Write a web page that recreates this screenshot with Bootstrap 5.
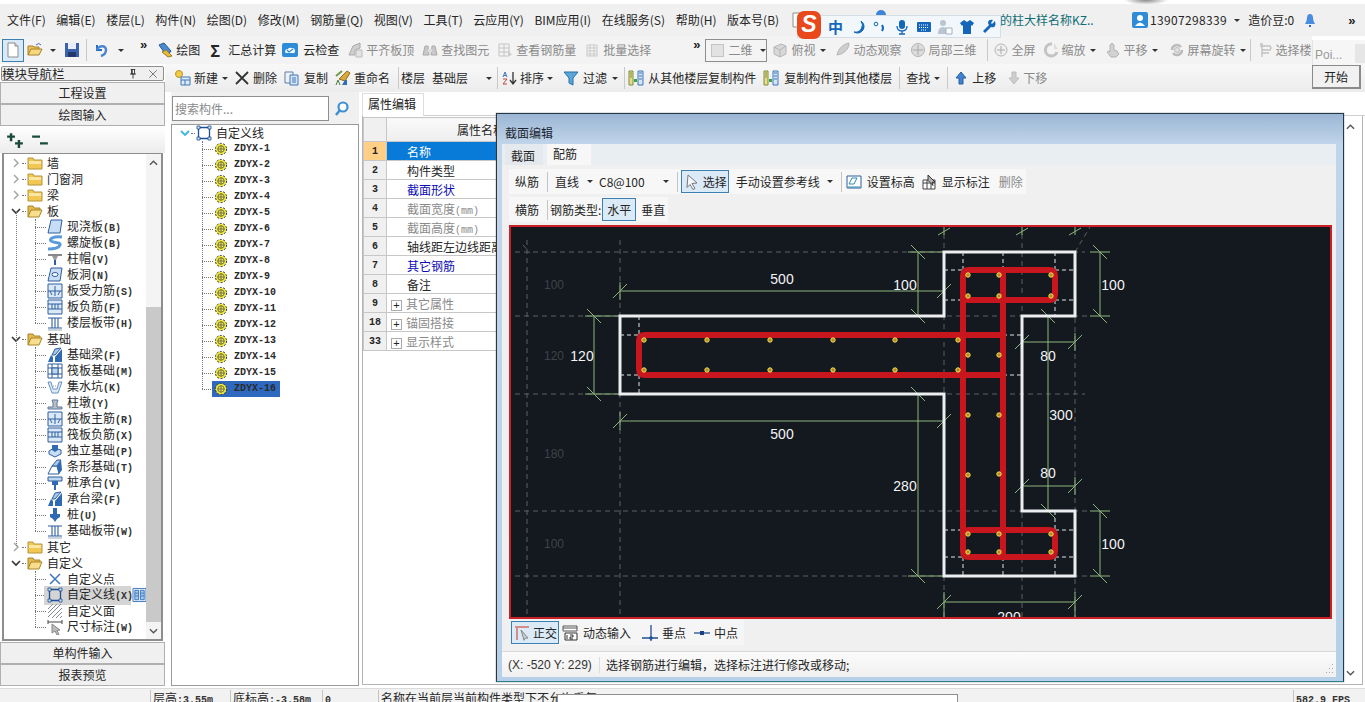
<!DOCTYPE html>
<html lang="zh-CN">
<head>
<meta charset="utf-8">
<title>截面编辑</title>
<link href="https://cdn.jsdelivr.net/npm/bootstrap@5.3.0/dist/css/bootstrap.min.css" rel="stylesheet">
<style>
html,body{height:702px;overflow:hidden;background:#fff}
body{font:12px/16px "Noto Sans CJK SC","Liberation Sans",sans-serif;color:#262626}
.app{position:relative;width:1365px;height:702px;overflow:hidden}
svg.ic{width:16px;height:16px;flex:none;display:block}
svg.ic12{width:12px;height:12px;flex:none;display:block}
.topgap{height:4px;background:radial-gradient(ellipse 22px 5px at 1146px 0,#8a8a8a,#fff)}
.menubar{height:32px;background:#f0f0f0;padding-left:7px;white-space:nowrap}
.menuitems{gap:10.6px}
.rcluster{width:365px;margin-left:auto;flex:none}
.teal{color:#0f6e75;width:93px;flex:none}
.phone{letter-spacing:.35px}
.peek{position:absolute;left:876px;top:10px;width:10px;height:5px;background:#3b86d6;border-radius:5px 5px 0 0}
.toolrow{height:28px;width:1312px;overflow:hidden;background:#f3f3f3;white-space:nowrap}
.rowthree{height:28px;background:linear-gradient(#f8f8f8,#ececec);padding-left:4px;white-space:nowrap}
.it{display:inline-flex;align-items:center;gap:3px;margin-left:8px;flex:none}
.off{color:#8a8a8a}
.tri{display:inline-block;width:0;height:0;border:3px solid transparent;border-top:3px solid #333;border-bottom:0;margin-left:4px;flex:none}
.rowthree .it>.tri,.toolrow .off>.tri{margin-left:1px}
.sepv{width:1px;height:22px;background:#c9c9c9;margin-left:6px;flex:none}
.more{font:bold 13px/14px "Liberation Sans",sans-serif;color:#222;margin-left:16px;flex:none;align-self:flex-start;margin-top:2px}
.pressed{background:#d8e9f8;border:1px solid #3c7fb1;height:23px;padding:0 2px}
.ml0{margin-left:0}.ml1{margin-left:1px}.ml2{margin-left:2px}.ml3{margin-left:3px}.ml4{margin-left:4px}.ml5{margin-left:5px}.ml6{margin-left:6px}.ml7{margin-left:7px}.ml8{margin-left:8px}.ml9{margin-left:9px}.ml10{margin-left:10px}.ml11{margin-left:11px}.ml12{margin-left:12px}.ml13{margin-left:13px}.ml15{margin-left:15px}.ml16{margin-left:16px}.ml18{margin-left:18px}.ml30{margin-left:30px}.ml39{margin-left:39px}.ml42{margin-left:42px}
.g1{gap:1px}.g2{gap:2px}.g3{gap:3px}.g4{gap:4px}.g5{gap:5px}
.combo2d{width:62px;height:23px;border:1px solid #8e8e8e;background:#f4f4f4;margin-left:5px;gap:4px;padding-left:5px;color:#8a8a8a;flex:none}
.combo2d b{width:15px;height:13px;background:#e2e2e2;border:1px solid #c4c4c4;display:block}
.mainarea{height:624px}
.leftpane{width:165px;padding-top:2px;flex:none}
.panehead{height:15px;margin:0 1px 1px;border:1px solid #8f8f8f;background:#efefef;line-height:12px;font-size:12.5px;border-radius:2px}
.navbtn.btn{display:block;width:100%;height:22px;padding:0;border-radius:0;border:1px solid #b0b0b0;background:#f0f0f0;font-size:12px;line-height:20px;color:#262626;margin:0}
.pm{height:27px;background:linear-gradient(#fff,#ececec);padding-left:6px;gap:7px}
.pm svg.ic{width:18px;height:18px}
.leftbox{height:488px;border:1px solid #8e8e8e;border-width:1px 2px 2px;margin:0 0 1px 2px;width:161px;background:#fff;position:relative;overflow:hidden;padding-top:1px}
.rowt{height:16px;display:flex;align-items:center;white-space:nowrap}
.chev{width:12px;margin-left:6px;flex:none;display:block;height:10px}
.dashh{width:4px;border-bottom:1px dotted #777;flex:none;margin-right:1px}
.kids{margin-left:31px;position:relative}
.kids::before{content:"";position:absolute;left:0;top:0;bottom:8px;border-left:1px dotted #777}
.kids.long::after{content:"";position:absolute;left:-19px;top:-7px;bottom:-7px;border-left:1px dotted #777}
.kids .dashh{width:11px;margin-right:1px}
.kids .lbl{margin-left:4px}
.lat{font:10px/16px "Liberation Mono",monospace;font-weight:700;color:#333}
.fold{width:16px;height:14px;margin-right:4px;flex:none}
.curitem{background:#d4d4d4;width:87px;margin-left:-3px;padding-left:3px;flex:none}
.sidegrid{width:15px;height:16px;flex:none;margin-left:1px}
.scrolly{position:absolute;right:0;top:0;bottom:0;width:15px;background:#f4f4f4}
.thumb{position:absolute;left:0;right:0;top:153px;height:315px;background:#c9c9c9}
.arrowup,.arrowdn{position:absolute;left:3px;width:9px;height:6px}
.arrowup{top:6px}.arrowdn{bottom:5px}
.midpane{width:188px;margin-left:6px;flex:none}
.searchrow{height:32px;background:#f0f0f0;padding-top:4px}
.searchrow .form-control{width:157px;height:25px;border:1px solid #8e8e8e;border-radius:0;font-size:12px;padding:0 2px;margin-left:1px;box-shadow:none}
.searchrow .form-control::placeholder{color:#8a8a8a}
.searchrow svg.ic{margin:5px 0 0 5px}
.comptree{height:562px;border:1px solid #9a9a9a;background:#fff}
.comptree .top{padding-left:7px}
.comptree .chev{margin-left:0;width:12px}
.ck{margin-left:30px;position:relative}
.ck::before{content:"";position:absolute;left:0;top:0;bottom:8px;border-left:1px dotted #777}
.ck .rowt svg{width:14px;height:14px;flex:none}
.ck .dashh{width:11px;margin-right:1px}
.zd{font:10px/16px "Liberation Mono",monospace;font-weight:700;color:#2b2b2b;margin-left:6px}
.selwrap{margin-left:-2px;padding:0 4px 0 2px;background:#2e68bf;display:flex;align-items:center;height:16px;flex:none}
.rightpane{margin-left:3px;flex-grow:1;min-width:0}
.tabsrow .nav-link{height:23px;padding:2px 5px;font-size:12px;color:#222;border:1px solid #ddd;border-bottom:0;border-radius:0;background:#fff;width:62px}
.tabsrow{height:24px;padding-top:1px;border-bottom:1px solid #cfcfcf}
.propbox{height:569px;border:1px solid #b4b4b4;border-top:0;margin-right:2px;padding:1px 0 0 0;position:relative}
.proptable.table{width:213px;table-layout:fixed;margin:0;font-size:12px;--bs-table-border-color:#c7c7c7;--bs-table-color:#262626}
.proptable th,.proptable td{padding:0;height:19px;line-height:17px;white-space:nowrap;overflow:hidden;font-weight:400;vertical-align:middle}
.proptable thead th{height:24px;background:linear-gradient(#fafafa,#eee);text-align:center}
.proptable .num{background:#f0f0f0;text-align:center;font:10px/17px "Liberation Mono",monospace;font-weight:700;width:23px}
.proptable .nm{padding-left:20px}
.proptable .cur{background:#ffcf86}
.proptable .act{background:#087ad8;color:#fff}
.proptable .bl{color:#0b0bb5}
.proptable .gr{color:#8a8a8a}
.proptable .lat{color:#8a8a8a;font-weight:400;line-height:1}
.plus{display:inline-block;width:11px;height:11px;border:1px solid #aaa;margin:0 4px 0 -16px;color:#222;font:11px/9px "Liberation Sans",sans-serif;text-align:center;vertical-align:middle}
.statusbar{height:14px;background:#f2f2f2;border-top:1px solid #dcdcdc;white-space:nowrap;overflow:hidden;line-height:16px;position:relative;padding-top:1px}
.statusbar .cell{border-left:1px solid #c4c4c4;padding-left:2px;height:16px;flex:none;overflow:hidden}
.statusbar .lat{line-height:16px}
.c0{width:150px}.c1{width:80px}.c2{width:92px}.c3{width:56px}.c4{width:915px}
.tipbox{position:absolute;left:557px;top:5px;width:401px;height:10px;background:#fff;border:1px solid #8e8e8e;border-bottom:0}
.dlg{position:absolute;left:496px;top:113px;width:848px;height:569px;background:linear-gradient(#9bb6d4 0,#c1d5ea 30px,#b6d0ea 100%);border:1px solid #1f3b4a;border-bottom-color:#2c7f8c;border-left-color:#333;padding:0 7px 5px 5px;box-shadow:0 0 1px #555}
.dlgtitle{height:30px;padding:11px 0 0 3px;line-height:16px;color:#1b2430;font-size:12px}
.dlgbody{height:533px;background:#f0f0f0;display:flex;flex-direction:column}
.dlgtabs{background:#e9eef3;height:21px}
.dlgtabs .nav-link{height:21px;padding:4px 6px 0;border:0;border-radius:0;color:#262626;font-size:12px;background:#e4e9ee;margin:0 4px 0 3px;width:38px}
.dlgtabs .nav-link.active{background:#f7f7f7;width:44px;margin:0;padding:2px 9px 0 6px}
.subbar{background:#f7f7f7;height:25px;padding:0 3px 0 6px;white-space:nowrap;margin-left:7px;align-self:flex-start}
.firstsub{margin-top:4px;margin-bottom:3px}
.thin{width:1px;height:20px;background:#c4c4c4;margin-left:8px;flex:none}
.sbtn{background:#dbeaf7;border:1px solid #3c7fb1;height:23px;padding:0 1px 0 2px;display:inline-flex;align-items:center;gap:3px;flex:none;color:#262626}
.sbtn.wide{width:34px;padding:0 4px}
.canvaswrap{height:394px;margin:3px 4px 0 7px;background:#14181f;border:2px solid #cc1f26;flex:none}
.canvaswrap svg{display:block;width:100%;height:100%}
.btmbar{height:25px;margin:1px 0 0 9px;background:#f5f5f5;align-self:flex-start;padding-right:6px}
.dstatus{height:26px;margin-top:6px;background:linear-gradient(#fbfbfb,#f0f0f0);border-top:1px solid #d8d8d8;position:relative;padding-left:6px;flex:none}
.dstatus .s1{width:92px;font-size:12px;font-family:"Liberation Sans",sans-serif;color:#333;border-right:1px solid #ddd;flex:none}
.dstatus .s2{padding-left:6px}
.grip{position:absolute;right:2px;bottom:1px;width:10px;height:13px}
.sogou{position:absolute;left:797px;top:15px;width:204px;height:23px;background:#f2f7fb;border:1px solid #d5dde5;z-index:3}
.sogou svg{width:16px;height:16px;flex:none;margin-left:5.7px}
.sogou .zh{color:#1366b8;font-weight:700;font-size:15px;margin-left:30px;margin-right:2px}
.slogo{position:absolute;left:-1px;top:-5px;width:24px;height:28px;background:#e8481c;border-radius:7px;color:#fff;font:italic bold 23px/27px "Liberation Sans",sans-serif;text-align:center}
.poi{position:absolute;left:1312px;top:40px;width:53px;height:25px;background:#f6f6f6;color:#999;font-size:12px;padding:7px 0 0 2px;font-family:"Liberation Sans",sans-serif;border-left:1px solid #e4e4e4;z-index:2}
.poi::after{content:"";position:absolute;right:0;top:4px;width:10px;height:19px;background:#e6e6e6}
.poibtn.btn{position:absolute;left:1312px;top:65px;width:49px;height:24px;padding:0;border:1px solid #8a8a8a;border-right-width:2px;border-bottom-width:2px;border-radius:0;background:#f1f1f1;color:#222;font-size:12px;line-height:21px;z-index:2}
.sidearrow{position:absolute;left:1346px;width:9px;height:6px}
.sa1{top:124px}.sa2{top:670px}
</style>
</head>
<body>
<svg width="0" height="0" class="d-block position-absolute">
<defs>
<symbol id="new" viewBox="0 0 16 16"><path d="M3 1h7l3 3v11H3z" fill="#fff" stroke="#8d8d8d"/><path d="M10 1v3h3" fill="#ddd" stroke="#8d8d8d"/></symbol>
<symbol id="open" viewBox="0 0 16 16"><path d="M1 13V4h5l1 1h5v2" fill="#e9c25a" stroke="#a8822b"/><path d="M1 13l3-6h11l-3 6z" fill="#f6d77e" stroke="#a8822b"/><path d="M9 3q3-3 5 0" fill="none" stroke="#3b6fb5"/></symbol>
<symbol id="save" viewBox="0 0 16 16"><path d="M1 1h14v14H1z" fill="#3c62ad"/><path d="M4 1h8v6H4z" fill="#e7eef8"/><path d="M4 10h8v5H4z" fill="#23396b"/></symbol>
<symbol id="undo" viewBox="0 0 16 16"><path d="M4 3v5h5" fill="none" stroke="#2f6bbd" stroke-width="2"/><path d="M4 8c2-5 9-5 9 0 0 3-2 5-5 6" fill="none" stroke="#4a86d4" stroke-width="2.4"/></symbol>
<symbol id="drawi" viewBox="0 0 16 16"><path d="M2 3l5-2 7 8-4 5z" fill="#4a8ad0" stroke="#27568e"/><path d="M5 10l6 5 4-1-6-6z" fill="#e8b93f" stroke="#9c7c22"/></symbol>
<symbol id="cloud" viewBox="0 0 16 16"><rect x="0" y="1" width="16" height="14" rx="2" fill="#2d8bd8"/><path d="M3 10q0-3 3-3 1-2 4-1 3 0 3 3t-3 2H5q-2 0-2-1z" fill="#f5fbff"/><path d="M5 8l2 2 4-3" fill="none" stroke="#2d8bd8" stroke-width="1.3"/></symbol>
<symbol id="gr1" viewBox="0 0 16 16"><path d="M2 13l4-9 7-3v5l-5 2v5z" fill="#cfcfcf" stroke="#aaa"/><path d="M9 8h6v7H9z" fill="#e3e3e3" stroke="#bbb"/></symbol>
<symbol id="gr2" viewBox="0 0 16 16"><path d="M1 13l2-9h3l1 9zM9 13l1-9h3l2 9z" fill="#c9c9c9" stroke="#aaa"/><path d="M6 7h4v3H6z" fill="#ddd"/></symbol>
<symbol id="gr3" viewBox="0 0 16 16"><path d="M2 2h10v12H2zM2 6h10M2 10h10M7 2v12" fill="none" stroke="#c4c4c4"/><path d="M11 8l4 5-4 1" fill="#ccc"/></symbol>
<symbol id="gr4" viewBox="0 0 16 16"><path d="M3 3h10v11H3zM3 6h10M3 9h10M3 12h10M6 3v11M10 3v11" fill="#f4f4f4" stroke="#c9c9c9"/></symbol>
<symbol id="gr5" viewBox="0 0 16 16"><path d="M2 5l7-3 5 2v8l-6 3-6-3z" fill="#d8d8d8" stroke="#b5b5b5"/><path d="M2 5l6 3 6-4M8 8v7" fill="none" stroke="#b5b5b5"/></symbol>
<symbol id="gr6" viewBox="0 0 16 16"><path d="M2 13C3 7 8 2 14 1c0 6-5 11-12 12z" fill="#cfcfcf" stroke="#b3b3b3"/></symbol>
<symbol id="gr7" viewBox="0 0 16 16"><circle cx="8" cy="8" r="6.5" fill="#dcdcdc" stroke="#b3b3b3"/><path d="M8 3v10M3 8h10" stroke="#aaa"/></symbol>
<symbol id="gr8" viewBox="0 0 16 16"><circle cx="8" cy="8" r="6" fill="#f0f0f0" stroke="#b5b5b5"/><path d="M8 4v8M4 8h8" stroke="#aaa"/></symbol>
<symbol id="gr9" viewBox="0 0 16 16"><path d="M9 2a6 6 0 1 0 5 8" fill="none" stroke="#c3c3c3" stroke-width="3"/><path d="M11 1v6h4" fill="#ddd"/></symbol>
<symbol id="gr10" viewBox="0 0 16 16"><path d="M7 1l2 2v5l3 1 2 3-3 3H6L2 10l2-1 1 1V3z" fill="#d2d2d2" stroke="#b3b3b3"/></symbol>
<symbol id="gr11" viewBox="0 0 16 16"><path d="M3 8a5 5 0 0 1 9-3M13 8a5 5 0 0 1-9 3" fill="none" stroke="#bbb" stroke-width="2.5"/><circle cx="8" cy="8" r="2.5" fill="#e2e2e2" stroke="#bbb"/></symbol>
<symbol id="gr12" viewBox="0 0 16 16"><path d="M3 2h2v13M3 4h10l1 2-1 2H5M5 11h7" fill="none" stroke="#c1c1c1" stroke-width="1.4"/></symbol>
<symbol id="addi" viewBox="0 0 16 16"><circle cx="4" cy="4" r="3.5" fill="#f1cd47" stroke="#b9932a"/><path d="M6 7h9v8H6zM6 10h9M10 10v5" fill="#dfeaf8" stroke="#3f78bb"/></symbol>
<symbol id="copyi" viewBox="0 0 16 16"><path d="M1 2h8v11H1z" fill="#eef2f8" stroke="#5c7faa"/><path d="M6 5h8v10H6z" fill="#d6e4f5" stroke="#3f78bb"/><path d="M8 8h4M8 10h4M8 12h4" stroke="#3f78bb"/></symbol>
<symbol id="renamei" viewBox="0 0 16 16"><path d="M4 9L12 1l3 2-5 8z" fill="#d8a83d" stroke="#8f6f22"/><path d="M1 6l6-5" stroke="#6e9c4d" stroke-width="2"/><path d="M1 15l2-5 2 5" fill="none" stroke="#4a7a36"/><path d="M7 15l3-5h2v5" fill="#2e6dbb"/></symbol>
<symbol id="sorti" viewBox="0 0 16 16"><path d="M11 2v11M8 10l3 4 3-4" fill="none" stroke="#333" stroke-width="1.3"/><path d="M1 7l2-5 2 5M2 5.500h2" fill="none" stroke="#3e76bd"/><path d="M1 9h4l-4 5h4" fill="none" stroke="#b94a3e"/></symbol>
<symbol id="filteri" viewBox="0 0 16 16"><path d="M1 2h14L10 8v7l-4-2V8z" fill="#5aa7dc" stroke="#2a6ea8"/></symbol>
<symbol id="copyf" viewBox="0 0 16 16"><path d="M1 1h4v14H1z" fill="#eadb8e" stroke="#7a8f3b"/><path d="M2 3h2M2 5h2M2 7h2" stroke="#7a8f3b"/><path d="M10 1h5v14h-5z" fill="#d6e4f5" stroke="#3f78bb"/><path d="M11 3h3M11 6h3M11 9h3" stroke="#3f78bb"/><path d="M6 9h3v3H6z" fill="#3da34a"/></symbol>
<symbol id="up" viewBox="0 0 16 16"><path d="M8 2l5 6h-3v6H6V8H3z" fill="#3f82d1" stroke="#2a5d9f"/></symbol>
<symbol id="down" viewBox="0 0 16 16"><path d="M8 14L3 8h3V2h4v6h3z" fill="#cdcdcd" stroke="#bdbdbd"/></symbol>
<symbol id="x" viewBox="0 0 16 16"><path d="M2 2l12 12M14 2L2 14" stroke="#333" stroke-width="1.8"/></symbol>
<symbol id="pin" viewBox="0 0 16 16"><path d="M5 2h6M6 2v6h4V2M4 8h8M8 8v6M6 2h1v6" fill="none" stroke="#333" stroke-width="1.2"/></symbol>
<symbol id="xs" viewBox="0 0 16 16"><path d="M3 3l10 10M13 3L3 13" stroke="#555"/></symbol>
<symbol id="mag" viewBox="0 0 16 16"><circle cx="9" cy="6" r="4.500" fill="#fff" stroke="#3f8fd3" stroke-width="2.200"/><path d="M6 9l-4 5" stroke="#3f8fd3" stroke-width="2.500"/></symbol>
<symbol id="pls" viewBox="0 0 16 16"><path d="M1 5h7M4.500 2v7M8 11h7M11.500 8v7" stroke="#1b4a3a" stroke-width="2.200"/></symbol>
<symbol id="mns" viewBox="0 0 16 16"><path d="M1 5h7M8 11h7" stroke="#1b4a3a" stroke-width="2.200"/></symbol>
<symbol id="fc" viewBox="0 0 16 14"><path d="M1 13V2h5l1 2h8v9z" fill="#f2c752" stroke="#b5943c"/><path d="M2 5h12v3H2z" fill="#fbe6a5"/></symbol>
<symbol id="fo" viewBox="0 0 16 14"><path d="M1 13V2h5l1 2h6v2" fill="#e5b94b" stroke="#a9842c"/><path d="M1 13l3-7h11l-3 7z" fill="#f8dd8c" stroke="#a9842c"/></symbol>
<symbol id="cr" viewBox="0 0 10 10"><path d="M3 1l4 4-4 4" fill="none" stroke="#aaa" stroke-width="1.600"/></symbol>
<symbol id="cd" viewBox="0 0 10 10"><path d="M1 3l4 4 4-4" fill="none" stroke="#333" stroke-width="1.600"/></symbol>
<symbol id="cb" viewBox="0 0 10 10"><path d="M1 3l4 4 4-4" fill="none" stroke="#3fb6dc" stroke-width="1.800"/></symbol>
<symbol id="t1" viewBox="0 0 16 16"><path d="M4 1h11l-2 13H1z" fill="#c7dcf5" stroke="#2f5f9e"/></symbol>
<symbol id="t2" viewBox="0 0 16 16"><path d="M15 2C6 1 2 4 4 6s10 1 9 4-6 4-12 4" fill="none" stroke="#5a9bd9" stroke-width="3"/></symbol>
<symbol id="t3" viewBox="0 0 16 16"><path d="M1 3h14v2H1z" fill="#888"/><path d="M5 5h6l-2 4H7z" fill="#9a9a9a"/><path d="M7 9h2v5H7z" fill="#2f5f9e"/></symbol>
<symbol id="t4" viewBox="0 0 16 16"><path d="M4 1h11l-2 13H1z" fill="#c7dcf5" stroke="#2f5f9e"/><ellipse cx="8" cy="7.500" rx="3" ry="2" fill="#fff" stroke="#2f5f9e"/></symbol>
<symbol id="t5" viewBox="0 0 16 16"><path d="M1 1h14v14H1z" fill="#dbe8f7" stroke="#2f5f9e"/><path d="M1 8h14M8 3v10M3 8l2 4M13 8l-2 4" fill="none" stroke="#2f5f9e"/></symbol>
<symbol id="t6" viewBox="0 0 16 16"><path d="M1 1h14v14H1z" fill="#dbe8f7" stroke="#2f5f9e"/><path d="M1 5h14M1 10h14M5 5v5M11 5v5M8 5v5" fill="none" stroke="#2f5f9e"/></symbol>
<symbol id="t7" viewBox="0 0 16 16"><path d="M1 3h14M1 13h14M5 3v10M8 3v10M11 3v10" fill="none" stroke="#2f5f9e" stroke-width="1.100"/><path d="M1 15h14" stroke="#9ab"/></symbol>
<symbol id="t8" viewBox="0 0 16 16"><path d="M1 15l3-7 2 2V15zM8 15v-5l7-8v13z" fill="#2f6ab3"/><path d="M5 8l3-6 6-1-6 7z" fill="#a9c7ea" stroke="#2f5f9e"/></symbol>
<symbol id="t9" viewBox="0 0 16 16"><path d="M1 1h14v14H1z" fill="#fff" stroke="#2f5f9e"/><path d="M1 5h14M1 11h14M5 1v14M11 1v14" stroke="#2f5f9e"/><path d="M5 5h6v6H5z" fill="#bcd5f1" stroke="#2f5f9e"/></symbol>
<symbol id="t10" viewBox="0 0 16 16"><path d="M1 3h3l2 7h4l2-7h3l-4 11H5z" fill="#dbe8f7" stroke="#6a93c2"/><path d="M6 7h4" stroke="#999" stroke-dasharray="1 1"/></symbol>
<symbol id="t11" viewBox="0 0 16 16"><path d="M1 14h14v-2H10V8l1-3H5l1 3v4H1z" fill="#bdbdbd" stroke="#5a7ca8"/></symbol>
<symbol id="t12" viewBox="0 0 16 16"><path d="M2 8l5-3 7 2v4l-6 3-6-3z" fill="#c7dcf5" stroke="#2f5f9e"/><path d="M5 7V2h6v5l-3 2z" fill="#2f6ab3"/></symbol>
<symbol id="t13" viewBox="0 0 16 16"><path d="M1 15l4-8h5l2 8z" fill="#fff" stroke="#2f5f9e"/><path d="M5 7l5-6h4l-4 6z" fill="#a9c7ea" stroke="#2f5f9e"/><path d="M10 7l4-6 1 10-3 4z" fill="#2f6ab3"/></symbol>
<symbol id="t14" viewBox="0 0 16 16"><path d="M1 2h14v4H1z" fill="#bcd5f1" stroke="#2f5f9e"/><path d="M5 6h6v4H9v5H7v-5H5z" fill="#2f6ab3"/></symbol>
<symbol id="t15" viewBox="0 0 16 16"><path d="M6 1h4v6h3v3l-3 2-2 3-2-3-3-2V7h3z" fill="#2f6ab3"/></symbol>
<symbol id="t16" viewBox="0 0 16 16"><path d="M3 3l10 10M13 3L3 13" stroke="#3f78bb" stroke-width="1.500"/></symbol>
<symbol id="t17" viewBox="0 0 16 16"><path d="M2.500 2.500h11v11h-11z" fill="none" stroke="#1f4f93" stroke-width="1.300"/><path d="M1 1h3v3H1zM12 1h3v3h-3zM1 12h3v3H1zM12 12h3v3h-3z" fill="#cfe0f4" stroke="#1f4f93" stroke-width=".8"/></symbol>
<symbol id="t18" viewBox="0 0 16 16"><path d="M1 6l5-5M1 10l9-9M1 14L14 1M5 15L15 5M9 15l6-6M13 15l2-2" stroke="#7f8a96"/></symbol>
<symbol id="t19" viewBox="0 0 16 16"><path d="M1 1v4M15 1v4M1 3h14" stroke="#444"/><path d="M5 5l8 6-3 .500 2 4-2 .500-2-4-3 2z" fill="#bbb" stroke="#888"/></symbol>
<symbol id="gear" viewBox="0 0 14 14"><circle cx="7" cy="7" r="5.600" fill="#eeea3c" stroke="#333" stroke-dasharray="2 1.500"/><circle cx="7" cy="7" r="3.200" fill="none" stroke="#555" stroke-width=".8"/><path d="M7 3.500v7M3.500 7h7" stroke="#555" stroke-width=".8"/></symbol>
<symbol id="sidei" viewBox="0 0 16 16"><path d="M1 1h14v14H1z" fill="#e5f0fb" stroke="#3d78bd"/><path d="M3 3h4v10H3zM9 3h4v10H9zM3 6h4M3 9h4M9 6h4M9 9h4" fill="#a8c8ec" stroke="#3d78bd"/></symbol>
<symbol id="arr" viewBox="0 0 16 16"><path d="M4 1l9 8-5 .500 3 5-2 1-3-5-3 3z" fill="#f4f7fb" stroke="#777"/></symbol>
<symbol id="stdh" viewBox="0 0 16 16"><path d="M1 2h14v12H1z" fill="#fff" stroke="#2f5f9e"/><path d="M3 10l3-6h5l-3 6zM2 13h12" fill="none" stroke="#2f8ea8"/></symbol>
<symbol id="shown" viewBox="0 0 16 16"><path d="M1 6h12v9H1zM1 9h12M5 6v9M9 6v9" fill="#fff" stroke="#444"/><path d="M6 1l7 7-3 .500 1 3-5-5z" fill="#b2b2b2" stroke="#333"/></symbol>
<symbol id="ortho" viewBox="0 0 16 16"><path d="M1 2h14M3 2v13" stroke="#d78c8c" stroke-width="2"/><path d="M7 5l7 8-3 .300-1 2z" fill="#c8cdd3" stroke="#888"/></symbol>
<symbol id="dyn" viewBox="0 0 16 16"><path d="M1 1h14v5H1zM1 3h14" fill="#fff" stroke="#555"/><path d="M3 8h12v7H3z" fill="#fff" stroke="#333"/><path d="M5 10v4M8 10h3v2H8v2h3" fill="none" stroke="#333"/></symbol>
<symbol id="perp" viewBox="0 0 16 16"><path d="M0 13h16M9 0v16" stroke="#1f4f93" stroke-width="1.300"/><circle cx="9" cy="13" r="1.800" fill="#1f4f93"/></symbol>
<symbol id="midp" viewBox="0 0 16 16"><path d="M0 8h16" stroke="#1f4f93" stroke-width="1.300"/><rect x="6" y="6" width="4" height="4" fill="#1a3f86"/></symbol>
<symbol id="user" viewBox="0 0 16 16"><rect width="16" height="16" rx="2" fill="#2d8bd8"/><circle cx="8" cy="6" r="3" fill="#fff"/><path d="M3 14q5-7 10 0z" fill="#fff"/></symbol>
<symbol id="bell" viewBox="0 0 16 16"><path d="M3 12q2-3 2-6 0-4 3-4t3 4q0 3 2 6z" fill="#4a8de0"/><path d="M7 13h2v2H7z" fill="#2d6cc0"/></symbol>
<symbol id="moon" viewBox="0 0 16 16"><path d="M10 2a6 6 0 0 1-7 11A7 7 0 0 0 10 2z" fill="#1366b8" stroke="#1366b8"/></symbol>
<symbol id="dot" viewBox="0 0 16 16"><circle cx="4" cy="5" r="1.800" fill="none" stroke="#1366b8"/><path d="M10 6q2 3 0 6" fill="none" stroke="#1366b8" stroke-width="2"/></symbol>
<symbol id="mic" viewBox="0 0 16 16"><rect x="5" y="1" width="6" height="9" rx="3" fill="#1366b8"/><path d="M3 7q0 5 5 5t5-5M8 12v3M5 15h6" fill="none" stroke="#1366b8" stroke-width="1.300"/></symbol>
<symbol id="kbd" viewBox="0 0 16 16"><rect x="1" y="3" width="14" height="10" rx="1" fill="#1366b8"/><path d="M3 6h10M3 8.500h10M5 11h6" stroke="#fff" stroke-dasharray="1 1"/></symbol>
<symbol id="ppl" viewBox="0 0 16 16"><circle cx="6" cy="4" r="3" fill="#b9c6d2"/><path d="M1 15q0-7 5-7t5 7z" fill="#b9c6d2"/><path d="M9 9h6v6H9z" fill="#fff" stroke="#9fb0c0"/></symbol>
<symbol id="shirt" viewBox="0 0 16 16"><path d="M5 1l3 2 3-2 4 3-2 3-1-1v9H4V6L3 7 1 4z" fill="#1366b8"/></symbol>
<symbol id="wrench" viewBox="0 0 16 16"><path d="M14 2l-3 3-1-1 2-3q-4-1-5 2 0 2 1 3l-6 6 2 2 6-6q3 1 4-1 1-2 0-5z" fill="#1366b8"/></symbol>
</defs>
</svg>

<div class="app">
<div class="topgap"></div>

<div class="menubar d-flex align-items-center">
<div class="menuitems d-flex align-items-center">
<span>文件(F)</span><span>编辑(E)</span><span>楼层(L)</span><span>构件(N)</span><span>绘图(D)</span><span>修改(M)</span><span>钢筋量(Q)</span><span>视图(V)</span><span>工具(T)</span><span>云应用(Y)</span><span>BIM应用(I)</span><span>在线服务(S)</span><span>帮助(H)</span><span>版本号(B)</span>
<svg class="ic"><use href="#new"/></svg>
</div>
<div class="rcluster d-flex align-items-center">
<span class="teal">的柱大样名称KZ..</span>
<svg class="ic ml39"><use href="#user"/></svg><span class="ml2 phone">13907298339</span><span class="tri ml7"></span><span class="ml8">造价豆:0</span><svg class="ic ml8"><use href="#bell"/></svg>
<span class="more ml30">»</span>
</div>
</div>

<div class="toolrow d-flex align-items-center">
<span class="it pressed ml2"><svg class="ic"><use href="#new"/></svg></span>
<span class="it ml3"><svg class="ic"><use href="#open"/></svg><span class="tri"></span></span>
<span class="it"><svg class="ic"><use href="#save"/></svg></span>
<span class="sepv"></span>
<span class="it ml6"><svg class="ic"><use href="#undo"/></svg><span class="tri ml6"></span></span>
<span class="more">»</span>
<span class="it ml10"><svg class="ic"><use href="#drawi"/></svg>绘图</span>
<span class="it ml10 gap-2"><b class="fs-6 lh-1">Σ</b>汇总计算</span>
<span class="it ml6"><svg class="ic"><use href="#cloud"/></svg><span class="ml2">云检查</span></span>
<span class="it off"><svg class="ic"><use href="#gr1"/></svg>平齐板顶</span>
<span class="it off"><svg class="ic"><use href="#gr2"/></svg>查找图元</span>
<span class="it off"><svg class="ic"><use href="#gr3"/></svg>查看钢筋量</span>
<span class="it off"><svg class="ic"><use href="#gr4"/></svg>批量选择</span>
<span class="more ml42">»</span>
<span class="combo2d d-flex align-items-center"><b></b>二维<span class="tri"></span></span>
<span class="it ml5 off"><svg class="ic"><use href="#gr5"/></svg>俯视<span class="tri"></span></span>
<span class="it ml9 off"><svg class="ic"><use href="#gr6"/></svg>动态观察</span>
<span class="it off"><svg class="ic"><use href="#gr7"/></svg>局部三维</span>
<span class="sepv ml10"></span>
<span class="it ml5 off"><svg class="ic"><use href="#gr8"/></svg>全屏</span>
<span class="it ml7 off"><svg class="ic"><use href="#gr9"/></svg>缩放<span class="tri"></span></span>
<span class="it ml9 off"><svg class="ic"><use href="#gr10"/></svg>平移<span class="tri"></span></span>
<span class="it ml11 off"><svg class="ic"><use href="#gr11"/></svg>屏幕旋转<span class="tri"></span></span>
<span class="sepv ml4"></span>
<span class="it ml6 off"><svg class="ic"><use href="#gr12"/></svg>选择楼</span>
</div>

<div class="mainarea d-flex">
<div class="leftpane">
 <div class="panehead d-flex align-items-center justify-content-between"><span>模块导航栏</span><span class="d-flex gap-2 pe-1"><svg class="ic12"><use href="#pin"/></svg><svg class="ic12"><use href="#xs"/></svg></span></div>
 <button class="btn navbtn" type="button">工程设置</button>
 <button class="btn navbtn" type="button">绘图输入</button>
 <div class="pm d-flex align-items-center"><svg class="ic"><use href="#pls"/></svg><svg class="ic"><use href="#mns"/></svg></div>
 <div class="leftbox">
  <div class="rowt"><svg class="chev"><use href="#cr"/></svg><span class="dashh"></span><svg class="fold"><use href="#fc"/></svg><span>墙</span></div>
  <div class="rowt"><svg class="chev"><use href="#cr"/></svg><span class="dashh"></span><svg class="fold"><use href="#fc"/></svg><span>门窗洞</span></div>
  <div class="rowt"><svg class="chev"><use href="#cr"/></svg><span class="dashh"></span><svg class="fold"><use href="#fc"/></svg><span>梁</span></div>
  <div class="rowt"><svg class="chev"><use href="#cd"/></svg><span class="dashh"></span><svg class="fold"><use href="#fo"/></svg><span>板</span></div>
  <div class="kids long">
   <div class="rowt"><span class="dashh"></span><svg class="ic"><use href="#t1"/></svg><span class="lbl">现浇板<span class="lat">(B)</span></span></div>
   <div class="rowt"><span class="dashh"></span><svg class="ic"><use href="#t2"/></svg><span class="lbl">螺旋板<span class="lat">(B)</span></span></div>
   <div class="rowt"><span class="dashh"></span><svg class="ic"><use href="#t3"/></svg><span class="lbl">柱帽<span class="lat">(V)</span></span></div>
   <div class="rowt"><span class="dashh"></span><svg class="ic"><use href="#t4"/></svg><span class="lbl">板洞<span class="lat">(N)</span></span></div>
   <div class="rowt"><span class="dashh"></span><svg class="ic"><use href="#t5"/></svg><span class="lbl">板受力筋<span class="lat">(S)</span></span></div>
   <div class="rowt"><span class="dashh"></span><svg class="ic"><use href="#t6"/></svg><span class="lbl">板负筋<span class="lat">(F)</span></span></div>
   <div class="rowt"><span class="dashh"></span><svg class="ic"><use href="#t7"/></svg><span class="lbl">楼层板带<span class="lat">(H)</span></span></div>
  </div>
  <div class="rowt"><svg class="chev"><use href="#cd"/></svg><span class="dashh"></span><svg class="fold"><use href="#fo"/></svg><span>基础</span></div>
  <div class="kids long">
   <div class="rowt"><span class="dashh"></span><svg class="ic"><use href="#t8"/></svg><span class="lbl">基础梁<span class="lat">(F)</span></span></div>
   <div class="rowt"><span class="dashh"></span><svg class="ic"><use href="#t9"/></svg><span class="lbl">筏板基础<span class="lat">(M)</span></span></div>
   <div class="rowt"><span class="dashh"></span><svg class="ic"><use href="#t10"/></svg><span class="lbl">集水坑<span class="lat">(K)</span></span></div>
   <div class="rowt"><span class="dashh"></span><svg class="ic"><use href="#t11"/></svg><span class="lbl">柱墩<span class="lat">(Y)</span></span></div>
   <div class="rowt"><span class="dashh"></span><svg class="ic"><use href="#t5"/></svg><span class="lbl">筏板主筋<span class="lat">(R)</span></span></div>
   <div class="rowt"><span class="dashh"></span><svg class="ic"><use href="#t6"/></svg><span class="lbl">筏板负筋<span class="lat">(X)</span></span></div>
   <div class="rowt"><span class="dashh"></span><svg class="ic"><use href="#t12"/></svg><span class="lbl">独立基础<span class="lat">(P)</span></span></div>
   <div class="rowt"><span class="dashh"></span><svg class="ic"><use href="#t13"/></svg><span class="lbl">条形基础<span class="lat">(T)</span></span></div>
   <div class="rowt"><span class="dashh"></span><svg class="ic"><use href="#t14"/></svg><span class="lbl">桩承台<span class="lat">(V)</span></span></div>
   <div class="rowt"><span class="dashh"></span><svg class="ic"><use href="#t8"/></svg><span class="lbl">承台梁<span class="lat">(F)</span></span></div>
   <div class="rowt"><span class="dashh"></span><svg class="ic"><use href="#t15"/></svg><span class="lbl">桩<span class="lat">(U)</span></span></div>
   <div class="rowt"><span class="dashh"></span><svg class="ic"><use href="#t7"/></svg><span class="lbl">基础板带<span class="lat">(W)</span></span></div>
  </div>
  <div class="rowt"><svg class="chev"><use href="#cr"/></svg><span class="dashh"></span><svg class="fold"><use href="#fc"/></svg><span>其它</span></div>
  <div class="rowt"><svg class="chev"><use href="#cd"/></svg><span class="dashh"></span><svg class="fold"><use href="#fo"/></svg><span>自定义</span></div>
  <div class="kids">
   <div class="rowt"><span class="dashh"></span><svg class="ic"><use href="#t16"/></svg><span class="lbl">自定义点</span></div>
   <div class="rowt"><span class="dashh"></span><span class="d-flex align-items-center curitem"><svg class="ic"><use href="#t17"/></svg><span class="lbl">自定义线<span class="lat">(X)</span></span></span><svg class="sidegrid"><use href="#sidei"/></svg></div>
   <div class="rowt"><span class="dashh"></span><svg class="ic"><use href="#t18"/></svg><span class="lbl">自定义面</span></div>
   <div class="rowt"><span class="dashh"></span><svg class="ic"><use href="#t19"/></svg><span class="lbl">尺寸标注<span class="lat">(W)</span></span></div>
  </div>
  <div class="scrolly"><svg class="arrowup" viewBox="0 0 10 6"><path d="M1 5l4-4 4 4" fill="none" stroke="#555" stroke-width="1.500"/></svg><div class="thumb"></div><svg class="arrowdn" viewBox="0 0 10 6"><path d="M1 1l4 4 4-4" fill="none" stroke="#555" stroke-width="1.500"/></svg></div>
 </div>
 <button class="btn navbtn" type="button">单构件输入</button>
 <button class="btn navbtn" type="button">报表预览</button>
</div>

<div class="flex-grow-1">
 <div class="rowthree d-flex align-items-center">
  <span class="it ml6"><svg class="ic"><use href="#addi"/></svg>新建<span class="tri"></span></span>
  <span class="it ml6"><svg class="ic"><use href="#x"/></svg>删除</span>
  <span class="it ml7 g4"><svg class="ic"><use href="#copyi"/></svg>复制</span>
  <span class="it ml7"><svg class="ic"><use href="#renamei"/></svg>重命名</span>
  <span class="sepv ml8"></span>
  <span class="it ml2">楼层</span>
  <span class="it ml7">基础层</span><span class="tri ml18"></span>
  <span class="sepv ml5"></span>
  <span class="it ml4 g2"><svg class="ic"><use href="#sorti"/></svg>排序<span class="tri"></span></span>
  <span class="it ml10 g4"><svg class="ic"><use href="#filteri"/></svg>过滤<span class="tri"></span></span>
  <span class="sepv ml6"></span>
  <span class="it ml3 g4"><svg class="ic"><use href="#copyf"/></svg>从其他楼层复制构件</span>
  <span class="it ml7 g5"><svg class="ic"><use href="#copyf"/></svg>复制构件到其他楼层</span>
  <span class="sepv ml7"></span>
  <span class="it ml6">查找<span class="tri"></span></span>
  <span class="sepv ml7"></span>
  <span class="it ml5"><svg class="ic"><use href="#up"/></svg>上移</span>
  <span class="it off ml10 g1"><svg class="ic"><use href="#down"/></svg>下移</span>
 </div>
 <div class="d-flex">
  <div class="midpane">
   <div class="searchrow d-flex">
    <input class="form-control" type="text" placeholder="搜索构件...">
    <svg class="ic"><use href="#mag"/></svg>
   </div>
   <div class="comptree">
    <div class="rowt top"><svg class="chev"><use href="#cb"/></svg><span class="dashh"></span><svg class="ic"><use href="#t17"/></svg><span class="ms-1">自定义线</span></div>
    <div class="ck">
     <div class="rowt"><span class="dashh"></span><svg><use href="#gear"/></svg><span class="zd">ZDYX-1</span></div>
     <div class="rowt"><span class="dashh"></span><svg><use href="#gear"/></svg><span class="zd">ZDYX-2</span></div>
     <div class="rowt"><span class="dashh"></span><svg><use href="#gear"/></svg><span class="zd">ZDYX-3</span></div>
     <div class="rowt"><span class="dashh"></span><svg><use href="#gear"/></svg><span class="zd">ZDYX-4</span></div>
     <div class="rowt"><span class="dashh"></span><svg><use href="#gear"/></svg><span class="zd">ZDYX-5</span></div>
     <div class="rowt"><span class="dashh"></span><svg><use href="#gear"/></svg><span class="zd">ZDYX-6</span></div>
     <div class="rowt"><span class="dashh"></span><svg><use href="#gear"/></svg><span class="zd">ZDYX-7</span></div>
     <div class="rowt"><span class="dashh"></span><svg><use href="#gear"/></svg><span class="zd">ZDYX-8</span></div>
     <div class="rowt"><span class="dashh"></span><svg><use href="#gear"/></svg><span class="zd">ZDYX-9</span></div>
     <div class="rowt"><span class="dashh"></span><svg><use href="#gear"/></svg><span class="zd">ZDYX-10</span></div>
     <div class="rowt"><span class="dashh"></span><svg><use href="#gear"/></svg><span class="zd">ZDYX-11</span></div>
     <div class="rowt"><span class="dashh"></span><svg><use href="#gear"/></svg><span class="zd">ZDYX-12</span></div>
     <div class="rowt"><span class="dashh"></span><svg><use href="#gear"/></svg><span class="zd">ZDYX-13</span></div>
     <div class="rowt"><span class="dashh"></span><svg><use href="#gear"/></svg><span class="zd">ZDYX-14</span></div>
     <div class="rowt"><span class="dashh"></span><svg><use href="#gear"/></svg><span class="zd">ZDYX-15</span></div>
     <div class="rowt"><span class="dashh"></span><span class="selwrap"><svg><use href="#gear"/></svg><span class="zd">ZDYX-16</span></span></div>
    </div>
   </div>
  </div>
  <div class="rightpane">
   <ul class="nav tabsrow"><li class="nav-item"><a class="nav-link active" href="#">属性编辑</a></li></ul>
   <div class="propbox">
    <table class="table table-bordered proptable">
     <colgroup><col class="num"><col></colgroup>
     <thead><tr><th class="num"></th><th>属性名称</th></tr></thead>
     <tbody>
      <tr><td class="num cur">1</td><td class="nm act">名称</td></tr>
      <tr><td class="num">2</td><td class="nm">构件类型</td></tr>
      <tr><td class="num">3</td><td class="nm bl">截面形状</td></tr>
      <tr><td class="num">4</td><td class="nm gr">截面宽度<span class="lat">(mm)</span></td></tr>
      <tr><td class="num">5</td><td class="nm gr">截面高度<span class="lat">(mm)</span></td></tr>
      <tr><td class="num">6</td><td class="nm">轴线距左边线距离</td></tr>
      <tr><td class="num">7</td><td class="nm bl">其它钢筋</td></tr>
      <tr><td class="num">8</td><td class="nm">备注</td></tr>
      <tr><td class="num">9</td><td class="nm gr"><span class="plus">+</span>其它属性</td></tr>
      <tr><td class="num">18</td><td class="nm gr"><span class="plus">+</span>锚固搭接</td></tr>
      <tr><td class="num">33</td><td class="nm gr"><span class="plus">+</span>显示样式</td></tr>
     </tbody>
    </table>
   </div>
  </div>
 </div>
</div>
</div>

<div class="statusbar d-flex">
 <span class="c0"></span>
 <span class="cell c1">层高<span class="lat">:3.55m</span></span>
 <span class="cell c2">底标高<span class="lat">:-3.58m</span></span>
 <span class="cell c3"><span class="lat">0</span></span>
 <span class="cell c4">名称在当前层当前构件类型下不允许重复</span>
 <span class="cell"><span class="lat">582.9 FPS</span></span>
 <div class="tipbox"></div>
</div>

<!-- floating window -->
<div class="dlg">
 <div class="dlgtitle">截面编辑</div>
 <div class="dlgbody">
  <ul class="nav dlgtabs">
   <li class="nav-item"><a class="nav-link" href="#">截面</a></li>
   <li class="nav-item"><a class="nav-link active" href="#">配筋</a></li>
  </ul>
  <div class="subbar firstsub d-flex align-items-center">
   <span class="it ml0">纵筋</span><span class="thin"></span>
   <span class="it ml7">直线<span class="tri ml5"></span></span>
   <span class="it ml6">C8@100<span class="tri ml15"></span></span><span class="thin ml7"></span>
   <span class="sbtn ml3"><svg class="ic"><use href="#arr"/></svg>选择</span>
   <span class="it ml7">手动设置参考线<span class="tri"></span></span><span class="thin ml7"></span>
   <span class="it ml4 g5"><svg class="ic"><use href="#stdh"/></svg>设置标高</span>
   <span class="it ml7 g4"><svg class="ic"><use href="#shown"/></svg>显示标注</span>
   <span class="it off ml9">删除</span>
  </div>
  <div class="subbar d-flex align-items-center">
   <span class="it ml0">横筋</span><span class="thin"></span>
   <span class="it ml2">钢筋类型:</span>
   <span class="sbtn wide ml1">水平</span>
   <span class="it ml5">垂直</span>
  </div>
  <div class="canvaswrap">
   <svg viewBox="511 227 819 390" preserveAspectRatio="none">
    <g fill="none" stroke="#5b6067" stroke-dasharray="5 4">
     <path d="M515 252H1085M515 316H1090M515 394H1085M515 511H1090M515 576H1090"/>
     <path d="M527 240V618M620 240V618M944 234V618M1022 234V618M1075 255V618"/>
     <path d="M523 245L530 253M1075 252L1090 227"/>
    </g>
    <g fill="#3e4349" font-family="Liberation Sans, sans-serif" font-size="12">
     <text x="544" y="289">100</text><text x="544" y="360">120</text><text x="544" y="458">180</text><text x="544" y="548">100</text>
    </g>
    <g fill="none" stroke="#8db67d" stroke-width="1">
     <path d="M620 282V300M620 291H944M613 298L627 284M937 298L951 284"/>
     <path d="M620 412V430M620 421H944M613 428L627 414M937 428L951 414"/>
     <path d="M918 252V316M908 252H944M908 316H944M911 245L925 259M911 309L925 323"/>
     <path d="M918 394V576M908 394H944M908 576H944M911 387L925 401M911 569L925 583"/>
     <path d="M594 316V394M585 316H620M585 394H620M587 309L601 323M587 387L601 401"/>
     <path d="M1100 252V316M1090 252H1110M1090 316H1110M1093 245L1107 259M1093 309L1107 323"/>
     <path d="M1100 511V576M1090 511H1110M1090 576H1110M1093 504L1107 518M1093 569L1107 583"/>
     <path d="M1022 342H1075M1022 333V351M1075 333V351M1015 349L1029 335M1068 349L1082 335"/>
     <path d="M1048 316V511M1041 309L1055 323M1041 504L1055 518"/>
     <path d="M1022 486H1075M1022 477V495M1075 477V495M1015 493L1029 479M1068 493L1082 479"/>
     <path d="M944 602H1075M944 592V618M1075 592V618M937 609L951 595M1068 609L1082 595"/>
     <path d="M944 227V235M1022 227V235M1075 227V235M938 235L950 228M1016 235L1028 228M1069 235L1081 228"/>
    </g>
    <path d="M620 316H944V252H1075V316H1022V511H1075V576H944V394H620Z" fill="none" stroke="#eceef0" stroke-width="3"/>
    <g fill="none" stroke="#dfe5ea" stroke-dasharray="4 3">
     <path d="M620 335H639M620 375H639M639 316V335M639 375V394"/>
     <path d="M944 270H963M944 300H963M963 252V270M1003 252V270M1055 252V270M1055 300V316M1055 270H1075M1055 300H1075"/>
     <path d="M1003 335H1022M1003 375H1022"/>
     <path d="M944 530H963M944 557H963M963 557V576M1003 557V576M1055 511V530M1055 557V576M1055 530H1075M1055 557H1075"/>
    </g>
    <g fill="none" stroke="#c7161d" stroke-width="6">
     <path d="M1003 335H645Q639 335 639 341V369Q639 375 645 375H1003"/>
     <path d="M1003 270V557M963 276V552"/>
     <path d="M969 270H1049Q1055 270 1055 276V294Q1055 300 1049 300H969Q963 300 963 294V276Q963 270 969 270Z"/>
     <path d="M969 530H1049Q1055 530 1055 536V551Q1055 557 1049 557H969Q963 557 963 551V536Q963 530 969 530Z"/>
    </g>
    <g fill="#b9861f" stroke="#efe05a" stroke-width="1">
      <circle cx="644" cy="340" r="2.200"/><circle cx="707" cy="340" r="2.200"/><circle cx="770" cy="340" r="2.200"/><circle cx="833" cy="340" r="2.200"/><circle cx="895" cy="340" r="2.200"/><circle cx="958" cy="340" r="2.200"/>
      <circle cx="644" cy="370" r="2.200"/><circle cx="707" cy="370" r="2.200"/><circle cx="770" cy="370" r="2.200"/><circle cx="833" cy="370" r="2.200"/><circle cx="895" cy="370" r="2.200"/><circle cx="958" cy="370" r="2.200"/>
      <circle cx="968" cy="275" r="2.200"/><circle cx="999" cy="275" r="2.200"/><circle cx="1051" cy="275" r="2.200"/>
      <circle cx="968" cy="296" r="2.200"/><circle cx="999" cy="296" r="2.200"/><circle cx="1051" cy="296" r="2.200"/>
      <circle cx="968" cy="355" r="2.200"/><circle cx="999" cy="355" r="2.200"/>
      <circle cx="968" cy="415" r="2.200"/><circle cx="999" cy="415" r="2.200"/>
      <circle cx="968" cy="475" r="2.200"/><circle cx="999" cy="474" r="2.200"/>
      <circle cx="968" cy="534" r="2.200"/><circle cx="999" cy="534" r="2.200"/><circle cx="1051" cy="534" r="2.200"/>
      <circle cx="968" cy="552" r="2.200"/><circle cx="999" cy="552" r="2.200"/><circle cx="1051" cy="552" r="2.200"/>
    </g>
    <g fill="#f2f4f6" font-family="Liberation Sans, sans-serif" font-size="14" text-anchor="middle">
     <text x="782" y="284">500</text><text x="905" y="290">100</text><text x="582" y="361">120</text>
     <text x="782" y="439">500</text><text x="905" y="491">280</text><text x="1113" y="290">100</text>
     <text x="1048" y="361">80</text><text x="1061" y="420">300</text><text x="1048" y="478">80</text>
     <text x="1113" y="549">100</text><text x="1009" y="622">200</text>
    </g>
   </svg>
  </div>
  <div class="btmbar d-flex align-items-center">
   <span class="sbtn ml0"><svg class="ic"><use href="#ortho"/></svg>正交</span>
   <span class="it ml3 g5"><svg class="ic"><use href="#dyn"/></svg>动态输入</span>
   <span class="it ml11 g4"><svg class="ic"><use href="#perp"/></svg>垂点</span>
   <span class="it ml8 g4"><svg class="ic"><use href="#midp"/></svg>中点</span>
  </div>
  <div class="dstatus d-flex align-items-center">
   <span class="s1">(X: -520 Y: 229)</span>
   <span class="s2">选择钢筋进行编辑，选择标注进行修改或移动;</span>
   <svg class="grip" viewBox="0 0 10 13"><path d="M8 1h1v1H8zM5 5h1v1H5zM8 5h1v1H8zM2 9h1v1H2zM5 9h1v1H5zM8 9h1v1H8z" fill="#aaa"/></svg>
  </div>
 </div>
</div>

<svg class="sidearrow sa1" viewBox="0 0 10 6"><path d="M1 5l4-4 4 4" fill="none" stroke="#555" stroke-width="1.500"/></svg>
<svg class="sidearrow sa2" viewBox="0 0 10 6"><path d="M1 1l4 4 4-4" fill="none" stroke="#555" stroke-width="1.500"/></svg>

<div class="peek"></div>
<div class="sogou d-flex align-items-center">
 <span class="slogo">S</span>
 <span class="zh">中</span>
 <svg><use href="#moon"/></svg><svg><use href="#dot"/></svg><svg><use href="#mic"/></svg><svg><use href="#kbd"/></svg><svg><use href="#ppl"/></svg><svg><use href="#shirt"/></svg><svg><use href="#wrench"/></svg>
</div>

<div class="poi">Poi...</div>
<button class="btn poibtn" type="button">开始</button>
</div>
</body>
</html>
